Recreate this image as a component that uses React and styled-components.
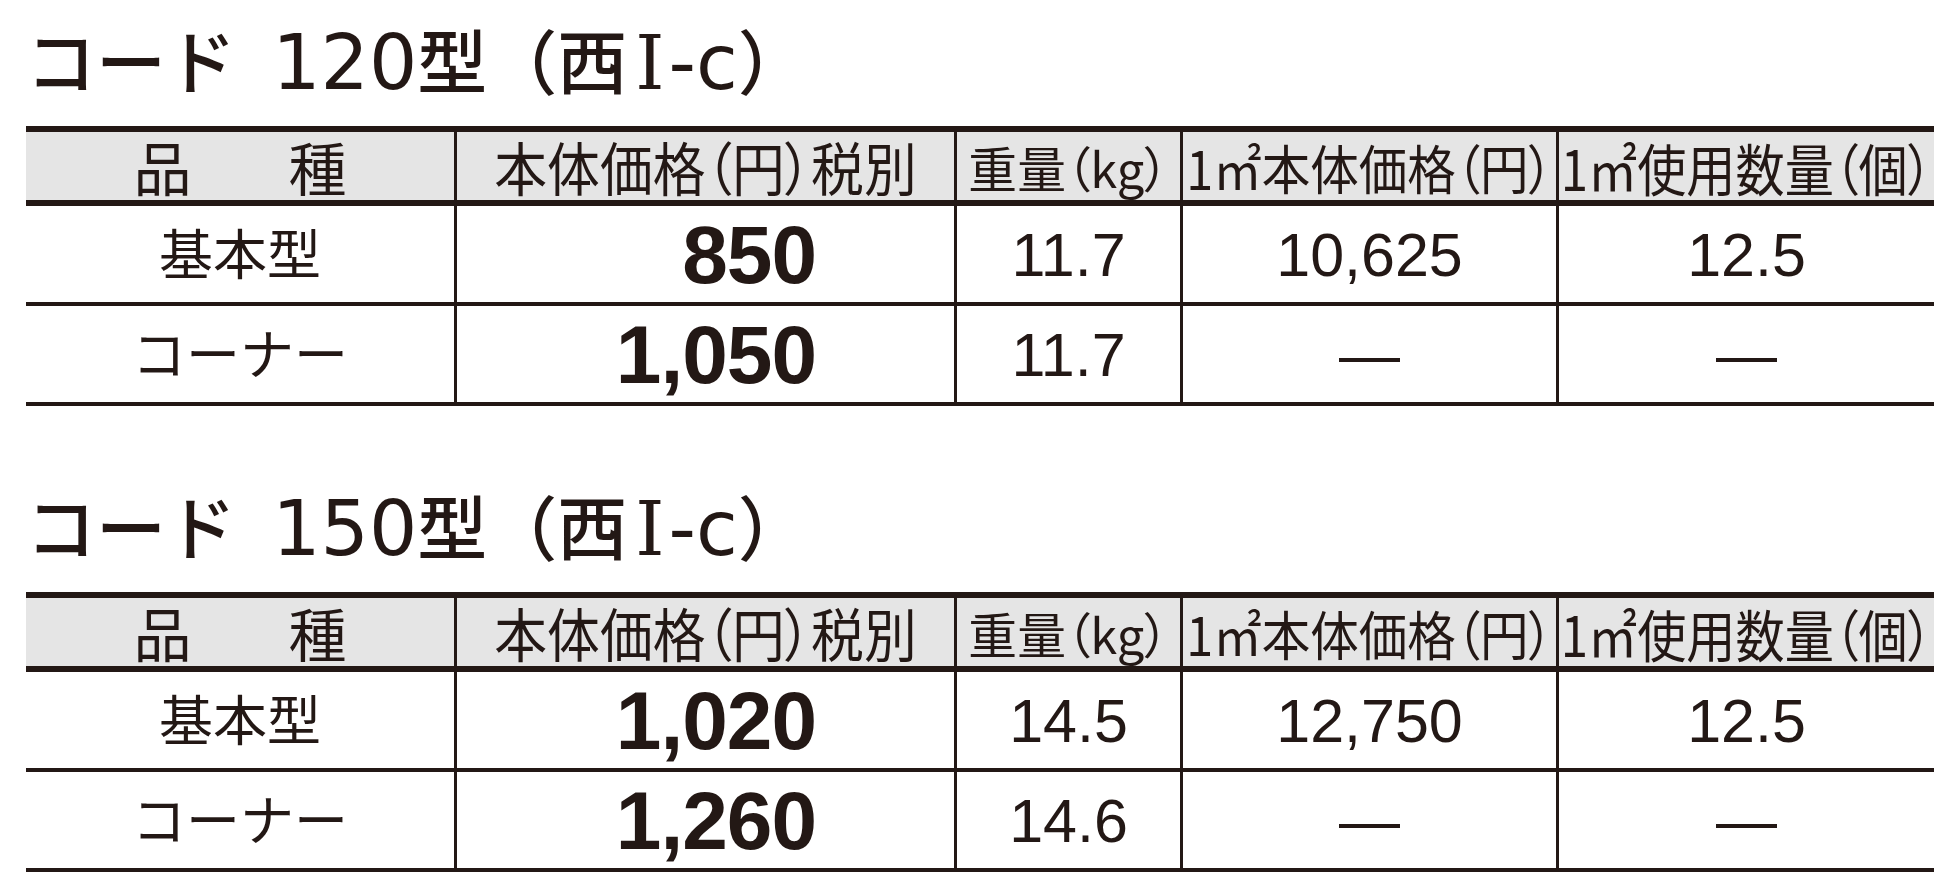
import styled, { createGlobalStyle } from 'styled-components';

const GlobalStyle = createGlobalStyle`
	html, body {
		margin: 0;
		padding: 0;
		background: #ffffff;
	}
	body {
		color: #231815;
		font-family: 'Noto Sans CJK JP', sans-serif;
	}
`;

// styles
const Page = styled.div`
	width: 1908px;
	padding-left: 26px;
`;

const Section = styled.section`
	& + & {
		margin-top: 60px;
	}
`;

const Title = styled.h2`
	box-sizing: border-box;
	height: 126px;
	margin: 0;
	padding-top: 19px;
	font-family: 'Noto Sans CJK JP', sans-serif;
	font-weight: 500;
	font-size: 70px;
	line-height: 80px;
	white-space: nowrap;
`;

const TitleLatin = styled.span`
	font-family: 'DejaVu Sans', sans-serif;
	font-weight: 400;
	font-size: 76px;
	margin-left: ${(props) => props.$gap || 0}px;
`;

const Roman = styled.span`
	margin-left: 8px;
	font-family: 'DejaVu Serif', serif;
	font-weight: 400;
	font-size: 74px;
`;

const Table = styled.div`
	display: flex;
	flex-direction: column;
`;

const Row = styled.div`
	display: grid;
	grid-template-columns: 428px 500px 226px 376px 378px;
	height: ${(props) => (props.$head ? '68px' : '96px')};
	background: ${(props) => (props.$head ? '#e5e5e5' : '#ffffff')};
	border-top: ${(props) => (props.$head ? '6px solid #231815' : 'none')};
	border-bottom: ${(props) => (props.$head ? '6px' : '4px')} solid #231815;
`;

const Cell = styled.div`
	box-sizing: border-box;
	display: flex;
	align-items: center;
	justify-content: ${(props) => (props.$right ? 'flex-end' : 'center')};
	padding-right: ${(props) => (props.$right ? '138px' : '0')};

	& + & {
		border-left: 3px solid #231815;
	}
`;

// print headers are set condensed: smaller size, stretched back to full height
const HeadLabel = styled.span`
	display: inline-block;
	margin-bottom: 5px;
	font-size: ${(props) => props.$size || 58}px;
	line-height: 1.2;
	white-space: nowrap;
	font-feature-settings: 'palt' 1;
	transform: scaleY(${(props) => props.$sy || 1});
`;

const Spread = styled.span`
	display: flex;
	gap: 97px;
	margin-bottom: 5px;
	font-size: 58px;
	line-height: 1.2;
`;

const Kind = styled.span`
	margin-bottom: 6px;
	font-size: 54px;
	line-height: 1.2;
	white-space: nowrap;
`;

const Price = styled.span`
	font-family: 'Liberation Sans', sans-serif;
	font-weight: 700;
	font-size: 82px;
	line-height: 1.2;
	letter-spacing: -1px;
`;

const Value = styled.span`
	font-family: 'Liberation Sans', sans-serif;
	font-size: 61px;
	line-height: 1.2;
`;

const headers = [
	{ label: '本体価格（円）税別', size: 52.8, sy: 1.09 },
	{ label: '重量（kg）', size: 48.8, sy: 1 },
	{ label: '1㎡本体価格（円）', size: 48.5, sy: 1.1 },
	{ label: '1㎡使用数量（個）', size: 49.2, sy: 1.13 },
];

const sections = [
	{
		size: '120',
		rows: [
			['基本型', '850', '11.7', '10,625', '12.5'],
			['コーナー', '1,050', '11.7', '—', '—'],
		],
	},
	{
		size: '150',
		rows: [
			['基本型', '1,020', '14.5', '12,750', '12.5'],
			['コーナー', '1,260', '14.6', '—', '—'],
		],
	},
];

const HeaderRow = () => (
	<Row $head>
		<Cell>
			<Spread>
				<span>品</span>
				<span>種</span>
			</Spread>
		</Cell>
		{headers.map((header) => (
			<Cell key={header.label}>
				<HeadLabel $size={header.size} $sy={header.sy}>
					{header.label}
				</HeadLabel>
			</Cell>
		))}
	</Row>
);

const App = () => {
	return (
		<>
			<GlobalStyle />
			<Page>
				{sections.map((section) => (
					<Section key={section.size}>
						<Title>
							コード<TitleLatin $gap={12}> {section.size}</TitleLatin>型（西<Roman>Ⅰ</Roman><TitleLatin $gap={4}>-c</TitleLatin>）
						</Title>
						<Table>
							<HeaderRow />
							{section.rows.map(([kind, price, weight, unitPrice, count]) => (
								<Row key={kind}>
									<Cell>
										<Kind>{kind}</Kind>
									</Cell>
									<Cell $right>
										<Price>{price}</Price>
									</Cell>
									<Cell>
										<Value>{weight}</Value>
									</Cell>
									<Cell>
										<Value>{unitPrice}</Value>
									</Cell>
									<Cell>
										<Value>{count}</Value>
									</Cell>
								</Row>
							))}
						</Table>
					</Section>
				))}
			</Page>
		</>
	);
};

export default App;
